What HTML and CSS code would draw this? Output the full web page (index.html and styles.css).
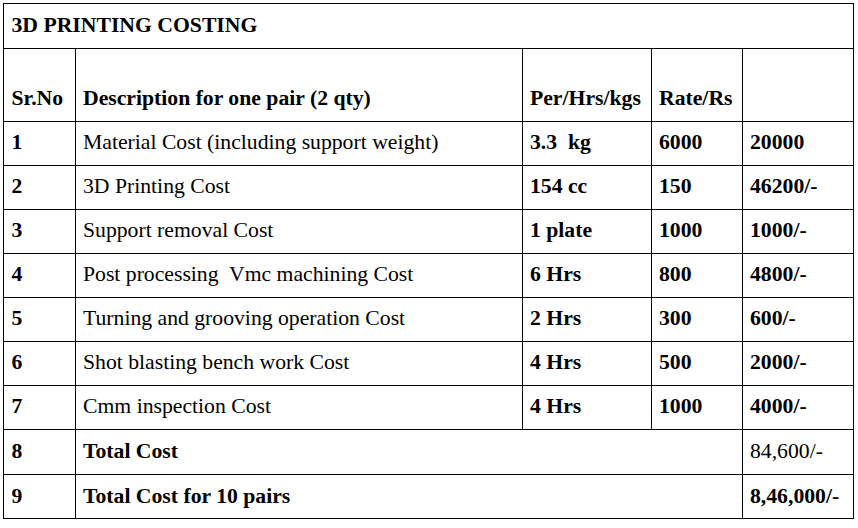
FILE: index.html
```html
<!DOCTYPE html>
<html>
<head>
<meta charset="utf-8">
<link rel="stylesheet" href="styles.css">
</head>
<body>
<table class="cost">
  <colgroup>
    <col class="c1"><col class="c2"><col class="c3"><col class="c4"><col class="c5">
  </colgroup>
  <tr class="title-row"><td colspan="5" class="b">3D PRINTING COSTING</td></tr>
  <tr class="head-row">
    <td class="b">Sr.No</td>
    <td class="b">Description for one pair (2 qty)</td>
    <td class="b">Per/Hrs/kgs</td>
    <td class="b">Rate/Rs</td>
    <td></td>
  </tr>
  <tr><td class="b">1</td><td>Material Cost (including support weight)</td><td class="b">3.3&nbsp; kg</td><td class="b">6000</td><td class="b">20000</td></tr>
  <tr><td class="b">2</td><td>3D Printing Cost</td><td class="b">154 cc</td><td class="b">150</td><td class="b">46200/-</td></tr>
  <tr><td class="b">3</td><td>Support removal Cost</td><td class="b">1 plate</td><td class="b">1000</td><td class="b">1000/-</td></tr>
  <tr><td class="b">4</td><td>Post processing&nbsp; Vmc machining Cost</td><td class="b">6 Hrs</td><td class="b">800</td><td class="b">4800/-</td></tr>
  <tr><td class="b">5</td><td>Turning and grooving operation Cost</td><td class="b">2 Hrs</td><td class="b">300</td><td class="b">600/-</td></tr>
  <tr><td class="b">6</td><td>Shot blasting bench work Cost</td><td class="b">4 Hrs</td><td class="b">500</td><td class="b">2000/-</td></tr>
  <tr><td class="b">7</td><td>Cmm inspection Cost</td><td class="b">4 Hrs</td><td class="b">1000</td><td class="b">4000/-</td></tr>
  <tr class="tall"><td class="b">8</td><td colspan="3" class="b">Total Cost</td><td>84,600/-</td></tr>
  <tr class="tall"><td class="b">9</td><td colspan="3" class="b">Total Cost for 10 pairs</td><td class="b">8,46,000/-</td></tr>
</table>
</body>
</html>
```
FILE: styles.css
```css
html, body {
  margin: 0;
  padding: 0;
  background: #fff;
}
body {
  padding: 3px 0 0 3px;
}
.cost {
  border-collapse: collapse;
  table-layout: fixed;
  width: 850px;
  font-family: "Liberation Serif", "Times New Roman", serif;
  font-size: 21.7px;
  color: #000;
}
.c1 { width: 71.5px; }
.c2 { width: 447px; }
.c3 { width: 129px; }
.c4 { width: 91px; }
.c5 { width: 111.5px; }
.cost td {
  border: 1.5px solid #000;
  padding: 0 0 4px 7.5px;
  height: 44px;
  box-sizing: border-box;
  vertical-align: middle;
  white-space: nowrap;
  line-height: 24px;
}
.cost td.b { font-weight: bold; }
.title-row td {
  height: 45px;
  padding-bottom: 2px;
}
.head-row td {
  height: 73px;
  vertical-align: bottom;
  padding-bottom: 11px;
}
.tall td { height: 44.5px; padding-bottom: 1px; }
```
